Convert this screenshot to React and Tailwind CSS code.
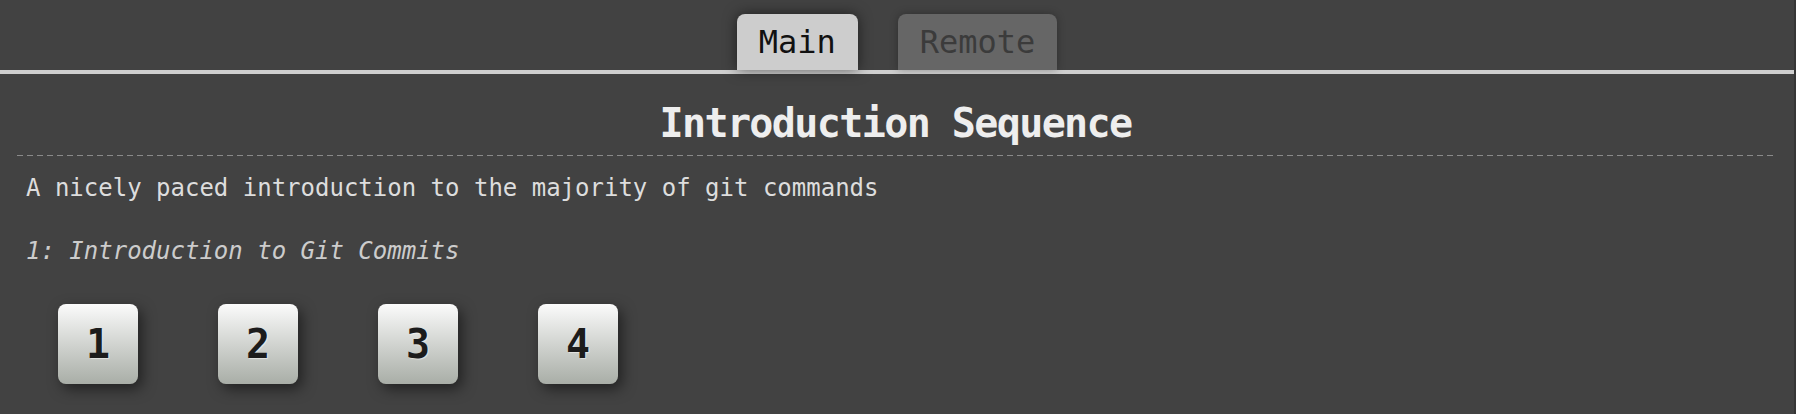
import React from "react";

const levels = ["1", "2", "3", "4"];

const App = () => {
  return (
    <div className="flex h-[414px] w-full bg-[#424242] font-['DejaVu_Sans_Mono',monospace]">
      <div className="flex flex-1 flex-col">
        {/* tab bar */}
        <div className="flex justify-center gap-10 border-b-4 border-[#cfcfcf] pt-[14px]">
          <div className="flex h-14 items-center rounded-t-lg bg-[#cdcdcd] px-[22px] text-[32px] text-[#111] shadow-[0_0_14px_rgba(0,0,0,0.55)]">
            Main
          </div>
          <div className="flex h-14 items-center rounded-t-lg bg-[#666666] px-[22px] text-[32px] text-[#3b3b3b] shadow-[0_0_8px_rgba(0,0,0,0.3)]">
            Remote
          </div>
        </div>

        <div className="ml-[17px] mr-[20px] flex flex-col">
          <h1 className="mt-[25px] text-center text-[40px] font-bold leading-[48px] tracking-[-1.6px] text-[#eeeeee]">
            Introduction Sequence
          </h1>
          <div className="mt-2 h-px bg-[repeating-linear-gradient(to_right,#8a8a8a_0_6px,transparent_6px_10px)]" />

          <p className="mt-4 pl-[9px] text-[24px] leading-[32px] text-[#dddddd]">
            A nicely paced introduction to the majority of git commands
          </p>
          <p className="mt-[31px] pl-[9px] text-[24px] italic leading-[32px] text-[#cccccc]">
            1: Introduction to Git Commits
          </p>

          <div className="mt-[37px] flex gap-20 pl-[41px]">
            {levels.map((n) => (
              <div
                key={n}
                className="flex h-20 w-20 items-center justify-center rounded-lg bg-linear-to-b from-[#fbfbfb] to-[#a9aea7] text-[40px] font-bold text-[#1c1c1c] shadow-[4px_5px_14px_rgba(0,0,0,0.5)] [text-shadow:1px_1px_1px_rgba(255,255,255,0.5)]"
              >
                {n}
              </div>
            ))}
          </div>
        </div>
      </div>
      <div className="w-[2px] bg-[#363636]" />
    </div>
  );
};

export default App;
